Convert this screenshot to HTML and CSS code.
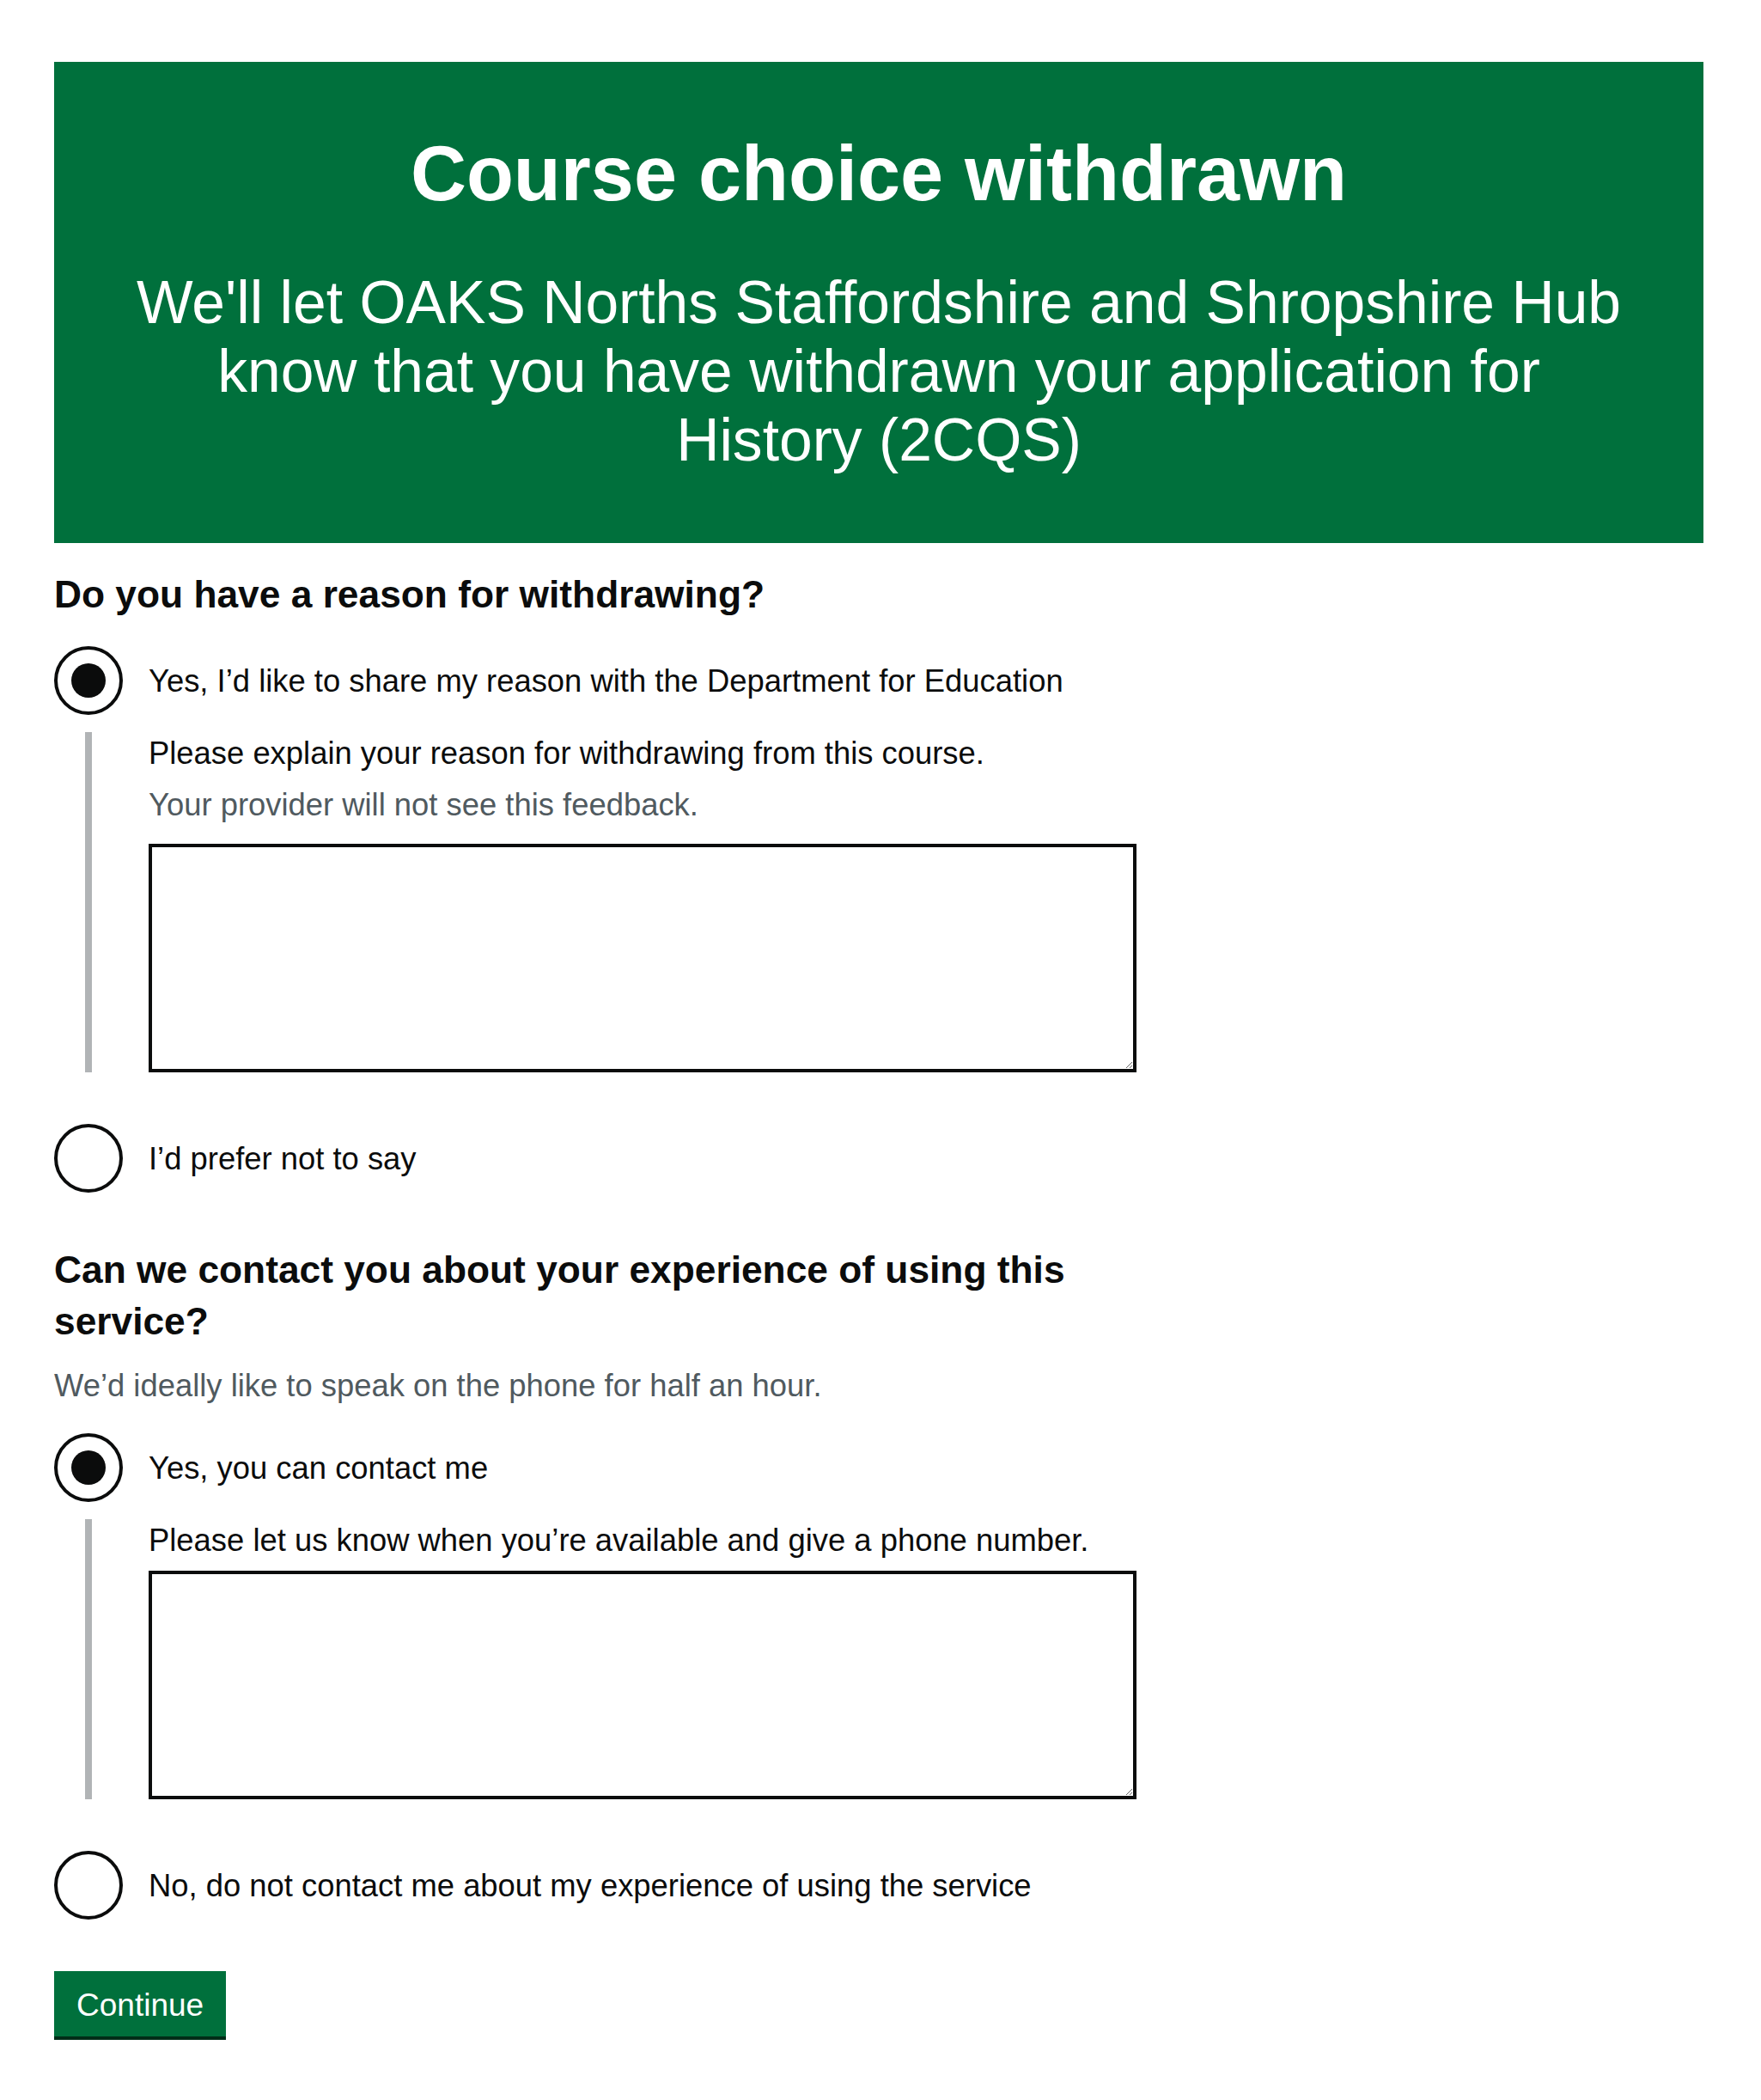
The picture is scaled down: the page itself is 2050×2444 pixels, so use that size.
FILE: index.html
```html
<!DOCTYPE html>
<html lang="en">
<head>
<meta charset="utf-8">
<title>Course choice withdrawn</title>
<link rel="stylesheet" href="styles.css">
</head>
<body>
<main class="page">
  <div class="panel">
    <h1 class="panel-title">Course choice withdrawn</h1>
    <div class="panel-body">We'll let OAKS Norths Staffordshire and Shropshire Hub know that you have withdrawn your application for History (2CQS)</div>
  </div>

  <form class="column">
    <div class="form-group">
      <fieldset class="fieldset">
        <legend class="legend">Do you have a reason for withdrawing?</legend>
        <div class="radios">
          <div class="radio-item">
            <span class="radio-mark radio-mark--checked"></span>
            <span class="radio-label">Yes, I’d like to share my reason with the Department for Education</span>
          </div>
          <div class="conditional">
            <label class="label">Please explain your reason for withdrawing from this course.</label>
            <div class="hint hint--label">Your provider will not see this feedback.</div>
            <textarea class="textarea" rows="5"></textarea>
          </div>
          <div class="radio-item radio-item--last">
            <span class="radio-mark"></span>
            <span class="radio-label">I’d prefer not to say</span>
          </div>
        </div>
      </fieldset>
    </div>

    <div class="form-group">
      <fieldset class="fieldset">
        <legend class="legend">Can we contact you about your experience of using this service?</legend>
        <div class="hint hint--legend">We’d ideally like to speak on the phone for half an hour.</div>
        <div class="radios">
          <div class="radio-item">
            <span class="radio-mark radio-mark--checked"></span>
            <span class="radio-label">Yes, you can contact me</span>
          </div>
          <div class="conditional">
            <label class="label">Please let us know when you’re available and give a phone number.</label>
            <textarea class="textarea" rows="5"></textarea>
          </div>
          <div class="radio-item radio-item--last">
            <span class="radio-mark"></span>
            <span class="radio-label">No, do not contact me about my experience of using the service</span>
          </div>
        </div>
      </fieldset>
    </div>

    <button type="button" class="button">Continue</button>
  </form>
</main>
</body>
</html>
```

FILE: styles.css
```css
html, body {
  margin: 0;
  padding: 0;
  background: #ffffff;
}

body {
  font-family: "Liberation Sans", Arial, sans-serif;
  color: #0b0c0c;
}

.page {
  width: 1920px;
  margin: 0 0 0 63px;
  padding: 72px 0 80px;
}

.panel {
  background: #00703c;
  color: #ffffff;
  text-align: center;
  padding: 80px;
  margin-bottom: 30px;
}

.panel-title {
  margin: 0 0 60px;
  font-size: 90px;
  line-height: 100px;
  font-weight: 700;
}

.panel-body {
  font-size: 69.6px;
  line-height: 80px;
  font-weight: 400;
}

.column {
  width: 1260px;
}

.form-group {
  margin-bottom: 60px;
}

.fieldset {
  margin: 0;
  padding: 0;
  border: 0;
  min-width: 0;
}

.legend {
  padding: 0;
  margin: 0 0 30px;
  font-size: 44.3px;
  line-height: 60px;
  font-weight: 700;
  color: #0b0c0c;
}

.hint {
  color: #505a5f;
  font-size: 36.4px;
  line-height: 50px;
}

.hint--legend {
  margin-top: -10px;
  margin-bottom: 30px;
}

.hint--label {
  margin-bottom: 20px;
}

.radios {
  display: flex;
  flex-direction: column;
}

.radio-item {
  display: flex;
  align-items: flex-start;
  min-height: 80px;
  margin-bottom: 20px;
}

.radio-item--last {
  margin-bottom: 0;
}

.radio-mark {
  flex: none;
  position: relative;
  width: 80px;
  height: 80px;
  box-sizing: border-box;
  border: 4px solid #0b0c0c;
  border-radius: 50%;
  background: #ffffff;
}

.radio-mark--checked::after {
  content: "";
  position: absolute;
  left: 16px;
  top: 16px;
  width: 40px;
  height: 40px;
  border-radius: 50%;
  background: #0b0c0c;
}

.radio-label {
  padding: 16px 30px 10px;
  font-size: 36.4px;
  line-height: 50px;
  color: #0b0c0c;
}

.conditional {
  margin-left: 36px;
  padding-left: 66px;
  border-left: 8px solid #b1b4b6;
  margin-bottom: 60px;
}

.label {
  display: block;
  font-size: 36.4px;
  line-height: 50px;
  margin-bottom: 10px;
  color: #0b0c0c;
}

.textarea {
  display: block;
  box-sizing: border-box;
  width: 100%;
  height: 266px;
  margin: 0;
  padding: 10px;
  border: 4px solid #0b0c0c;
  border-radius: 0;
  font-family: inherit;
  font-size: 36px;
  line-height: 1.25;
  background: #ffffff;
}

.button {
  display: inline-block;
  box-sizing: border-box;
  height: 76px;
  margin: 0;
  padding: 14px 22px 12px;
  border: 4px solid transparent;
  border-radius: 0;
  background: #00703c;
  color: #ffffff;
  font-family: inherit;
  font-size: 37px;
  line-height: 1;
  box-shadow: 0 4px 0 #002d18;
  cursor: pointer;
}
```
